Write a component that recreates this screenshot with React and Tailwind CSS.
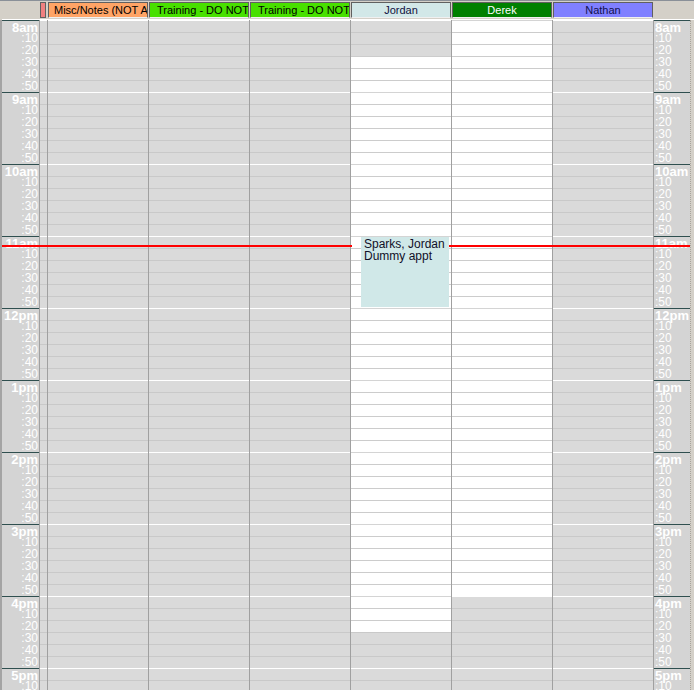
import React from "react";

const HOURS = ["8am", "9am", "10am", "11am", "12pm", "1pm", "2pm", "3pm", "4pm", "5pm"];
const MINS = [":10", ":20", ":30", ":40", ":50"];

const RESOURCES = [
  { name: "Misc/Notes (NOT AVAILABLE)", cls: "bg-[#ffa466] text-black justify-start pl-[5px]", open: [0, 0] },
  { name: "Training - DO NOT BOOK", cls: "bg-[#48e000] text-black justify-start pl-[7px]", open: [0, 0] },
  { name: "Training - DO NOT BOOK", cls: "bg-[#48e000] text-black justify-start pl-[7px]", open: [0, 0] },
  { name: "Jordan", cls: "bg-[#d2e8e8] text-[#101040] justify-center", open: [3, 51] },
  { name: "Derek", cls: "bg-[#008000] text-white justify-center", open: [0, 48] },
  { name: "Nathan", cls: "bg-[#8080ff] text-[#101050] justify-center", open: [0, 0] },
];

const ROWS = Array.from({ length: 60 }, (_, i) => i);

function Cells({ open }) {
  return ROWS.map((i) => {
    const free = i >= open[0] && i < open[1];
    const hourTop = i % 6 === 0;
    let cls = "h-[12px] border-t ";
    if (free) cls += hourTop ? "bg-white border-[#d4d4d4]" : "bg-white border-[#cccccc]";
    else cls += hourTop ? "bg-[#dadada] border-white" : "bg-[#dadada] border-[#c9c9c9]";
    return <div key={i} className={cls} />;
  });
}

function TimeColumn({ right }) {
  const align = right ? "pl-[1px]" : "text-right pr-[1px]";
  return (
    <div
      className={
        right
          ? "w-[36px] shrink-0 bg-[#d4d4d4]"
          : "w-[40px] shrink-0 bg-[#d4d4d4] border-l-2 border-l-[#a4a4a4] border-r border-r-[#a0a0a0]"
      }
    >
      {HOURS.map((h) => (
        <div key={h} className="h-[72px] border-t border-[#2f4f4f] flex flex-col text-white overflow-hidden">
          <div className={"h-[11px] leading-[13px] text-[13px] font-bold " + align}>{h}</div>
          {MINS.map((m) => (
            <div key={m} className={"h-[12px] leading-[12px] text-[12px] " + align}>
              {m}
            </div>
          ))}
        </div>
      ))}
    </div>
  );
}

export default function App() {
  return (
    <div className="w-[694px] h-[690px] overflow-hidden bg-[#d4d0c8] relative font-['Liberation_Sans',Arial,sans-serif]">
      {/* header */}
      <div className="flex h-[19px] border-t border-[#8a9098] bg-[#d4d0c8]">
        <div className="w-[40px] shrink-0" />
        <div className="w-[8px] shrink-0 pt-[1px]">
          <div className="w-[6px] h-[16px] bg-[#f08080] border border-[#606060]" />
        </div>
        {RESOURCES.map((r, i) => (
          <div key={i} className="w-[101px] shrink-0 pt-[1px]">
            <div
              className={
                "w-[100px] h-[16px] flex items-center overflow-hidden whitespace-nowrap text-[11px] leading-[13px] border border-[#606060] border-b-[#f0f0f0] " +
                r.cls
              }
            >
              {r.name}
            </div>
          </div>
        ))}
        <div className="flex-1" />
      </div>
      <div className="h-[1px] bg-white ml-[2px]" />

      {/* body */}
      <div className="flex">
        <TimeColumn />
        <div className="w-[8px] shrink-0 border-r border-[#a0a0a0]">
          <Cells open={[0, 0]} />
        </div>
        {RESOURCES.map((r, i) => (
          <div key={i} className="w-[101px] shrink-0 border-r border-[#a0a0a0]">
            <Cells open={r.open} />
          </div>
        ))}
        <TimeColumn right />
        <div className="w-[4px] shrink-0 bg-[#d4d0c8] border-l border-dotted border-[#a8a49c]" />
      </div>

      {/* current time line */}
      <div className="absolute left-[2px] top-[245px] w-[350px] h-[2px] bg-[#ff0000] z-10" />
      <div className="absolute left-[449px] top-[245px] w-[241px] h-[2px] bg-[#ff0000] z-10" />

      {/* appointment */}
      <div className="absolute left-[361px] top-[237px] w-[88px] h-[70px] bg-[#d0e8e8] z-20 pl-[3px] pt-[1px] text-[12px] leading-[12px] text-[#101028]">
        <div>Sparks, Jordan</div>
        <div>Dummy appt</div>
      </div>
    </div>
  );
}
